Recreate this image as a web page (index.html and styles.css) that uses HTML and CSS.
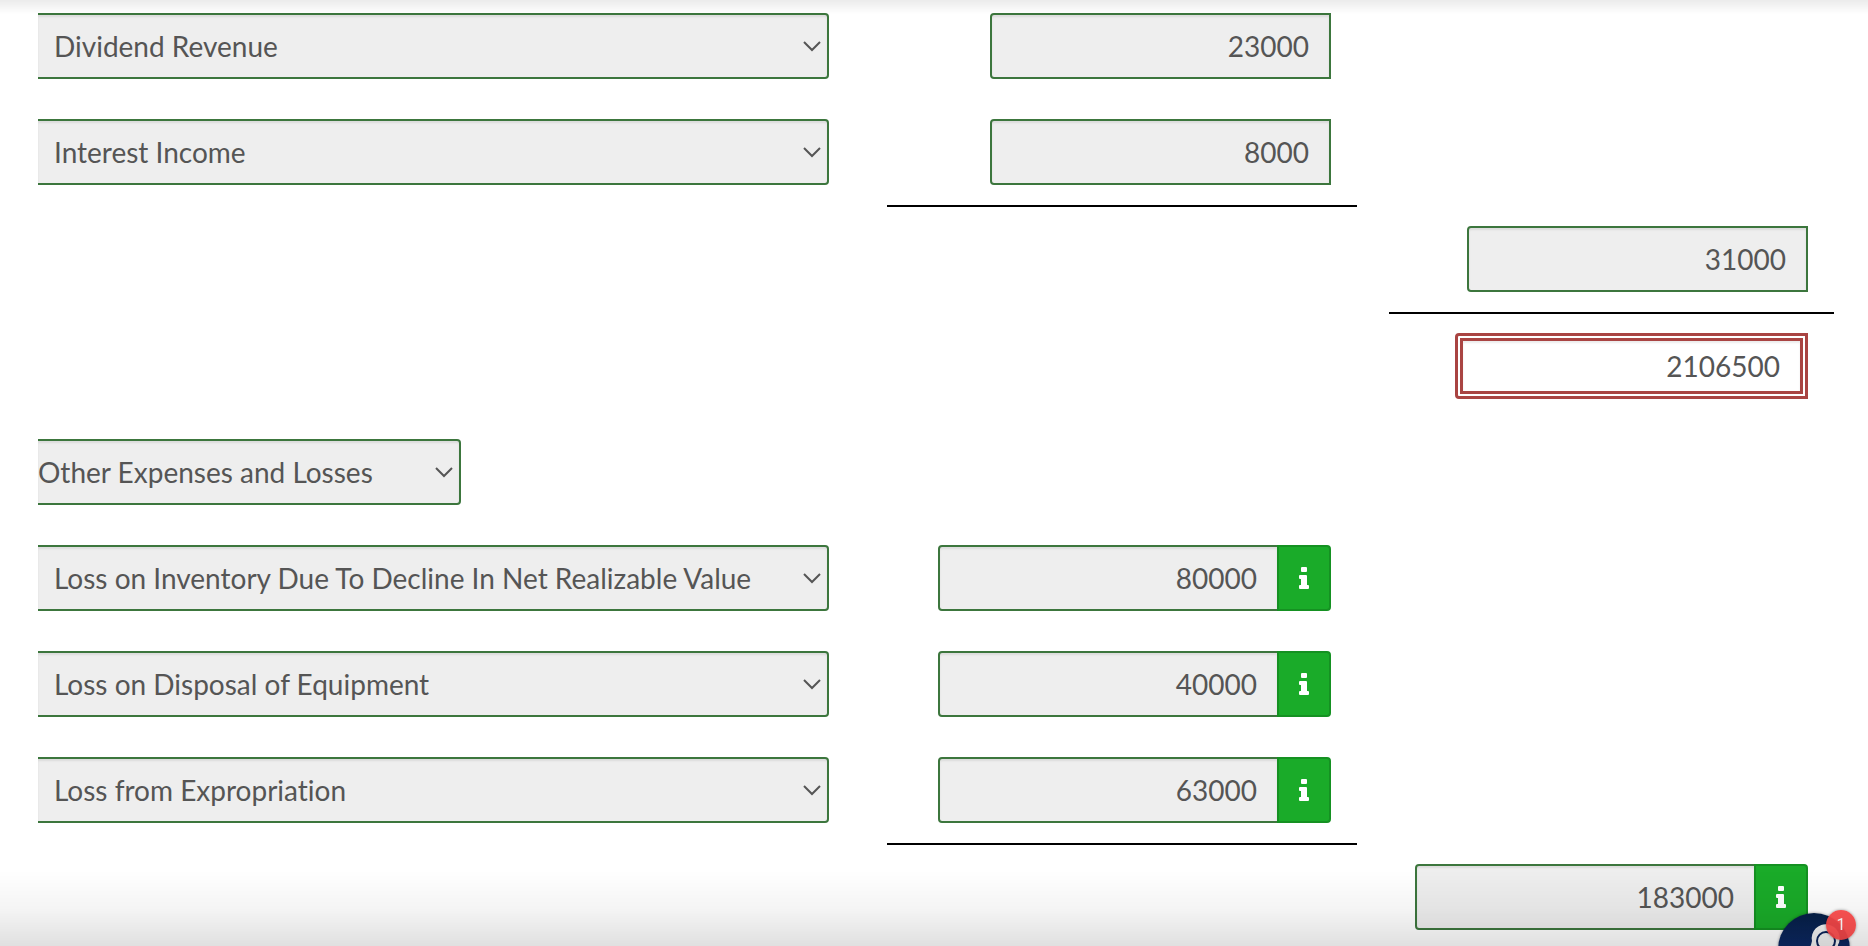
FILE: index.html
```html
<!DOCTYPE html>
<html lang="en">
<head>
<meta charset="utf-8">
<title>Income Statement</title>
<link rel="stylesheet" href="styles.css">
</head>
<body>
<svg class="sprite" aria-hidden="true">
  <symbol id="info" viewBox="0 0 10 22">
    <rect x="2" y="0" width="6" height="5" rx="1"/>
    <path d="M1 8h6q1 0 1 1v9h1q1 0 1 1v2q0 1-1 1H1q-1 0-1-1v-2q0-1 1-1h1v-6H1q-1 0-1-1V9q0-1 1-1z"/>
  </symbol>
</svg>
<main class="sheet">
  <table class="statement">
    <colgroup><col class="col-account"><col class="col-amount"><col class="col-gap"><col class="col-total"></colgroup>
    <tbody>
      <tr>
        <td class="account"><select class="picker" aria-label="Account 1" disabled><option>Dividend Revenue</option></select></td>
        <td><div class="amount"><input class="field" type="text" aria-label="Dividend Revenue amount" value="23000" readonly></div></td>
        <td></td><td></td>
      </tr>
      <tr>
        <td class="account"><select class="picker" aria-label="Account 2" disabled><option>Interest Income</option></select></td>
        <td class="rule"><div class="amount"><input class="field" type="text" aria-label="Interest Income amount" value="8000" readonly></div></td>
        <td></td><td></td>
      </tr>
      <tr class="after-rule">
        <td></td><td></td><td></td>
        <td class="rule"><div class="amount"><input class="field" type="text" aria-label="Total other revenues" value="31000" readonly></div></td>
      </tr>
      <tr class="after-rule">
        <td></td><td></td><td></td>
        <td><div class="amount"><input class="field field-wrong" type="text" aria-label="Subtotal" value="2106500"></div></td>
      </tr>
      <tr>
        <td class="account"><select class="picker picker-heading" aria-label="Section" disabled><option>Other Expenses and Losses</option></select></td>
        <td></td><td></td><td></td>
      </tr>
      <tr>
        <td class="account"><select class="picker" aria-label="Account 3" disabled><option>Loss on Inventory Due To Decline In Net Realizable Value</option></select></td>
        <td><div class="amount"><input class="field" type="text" aria-label="Loss on Inventory amount" value="80000" readonly><button class="info" type="button" aria-label="Answer details"><svg class="info-icon"><use href="#info"/></svg></button></div></td>
        <td></td><td></td>
      </tr>
      <tr>
        <td class="account"><select class="picker" aria-label="Account 4" disabled><option>Loss on Disposal of Equipment</option></select></td>
        <td><div class="amount"><input class="field" type="text" aria-label="Loss on Disposal amount" value="40000" readonly><button class="info" type="button" aria-label="Answer details"><svg class="info-icon"><use href="#info"/></svg></button></div></td>
        <td></td><td></td>
      </tr>
      <tr>
        <td class="account"><select class="picker" aria-label="Account 5" disabled><option>Loss from Expropriation</option></select></td>
        <td class="rule"><div class="amount"><input class="field" type="text" aria-label="Loss from Expropriation amount" value="63000" readonly><button class="info" type="button" aria-label="Answer details"><svg class="info-icon"><use href="#info"/></svg></button></div></td>
        <td></td><td></td>
      </tr>
      <tr class="after-rule">
        <td></td><td></td><td></td>
        <td><div class="amount"><input class="field" type="text" aria-label="Total other expenses" value="183000" readonly><button class="info" type="button" aria-label="Answer details"><svg class="info-icon"><use href="#info"/></svg></button></div></td>
      </tr>
    </tbody>
  </table>
</main>
<div class="chat">
  <button class="chat-button" type="button" aria-label="Open chat">
    <svg class="chat-icon" viewBox="0 0 72 72">
      <path d="M12 50Q31 44 34 28A14 14 0 1 1 60 32L56 60H12z" fill="#f2f2f2"/>
      <circle cx="48" cy="28" r="9" fill="#f2f2f2" stroke="#0c2459" stroke-width="2"/>
    </svg>
  </button>
  <span class="badge">1</span>
</div>
<div class="shade shade-top"></div>
<div class="shade shade-bottom"></div>
</body>
</html>
```
FILE: styles.css
```css
* {
  box-sizing: border-box;
}

html {
  height: 100%;
  overflow: hidden;
}

body {
  margin: 0;
  height: 100%;
  overflow: hidden;
  background: #fff;
  color: #555;
  font-family: Lato, "Open Sans", sans-serif;
  font-size: 28px;
  font-variant-ligatures: none;
}

.sprite {
  display: none;
}

.sheet {
  padding: 0 34px 0 38px;
  margin-top: -5px;
}

.statement {
  width: 100%;
  table-layout: fixed;
  border-collapse: separate;
  border-spacing: 0;
}

.col-amount {
  width: 470px;
}

.col-gap {
  width: 32px;
}

.col-total {
  width: 445px;
}

td {
  padding: 18px 26px 22px 0;
  vertical-align: top;
}

td.account {
  padding-right: 58px;
}

td.rule {
  padding-bottom: 20px;
  border-bottom: 2px solid #000;
}

.after-rule td {
  padding-top: 19px;
}

.picker,
.field {
  display: block;
  height: 66px;
  margin: 0;
  border: 2px solid #3c763d;
  background-color: #eee;
  box-shadow: inset 0 2px 2px rgba(0, 0, 0, 0.08);
  color: #555;
  font: inherit;
  font-variant-ligatures: none;
  opacity: 1;
}

.picker {
  appearance: none;
  width: 100%;
  padding: 0 40px 0 16px;
  border-left: 0;
  border-radius: 0 4px 4px 0;
  background-image: url("data:image/svg+xml,%3Csvg xmlns='http://www.w3.org/2000/svg' width='18' height='11' viewBox='0 0 18 11'%3E%3Cpath d='M1 1l8 8 8-8' fill='none' stroke='%23555' stroke-width='2'/%3E%3C/svg%3E");
  background-repeat: no-repeat;
  background-position: right 6px center;
}

.picker-heading {
  width: 423px;
  max-width: 100%;
  padding-left: 0;
}

.amount {
  display: flex;
  justify-content: flex-end;
}

.field {
  width: 341px;
  padding: 0 20px;
  border-radius: 4px 0 0 4px;
  text-align: right;
}

.field-wrong {
  width: 353px;
  border: 8px double #a94442;
  background-color: #fff;
}

.info {
  display: flex;
  align-items: center;
  justify-content: center;
  width: 54px;
  height: 66px;
  margin: 0 0 0 -2px;
  padding: 0;
  border: 2px solid #159122;
  border-radius: 0 4px 4px 0;
  background: #1aab29;
}

.info-icon {
  width: 10px;
  height: 22px;
  fill: #fff;
}

.chat {
  position: fixed;
  right: 18px;
  bottom: -39px;
  width: 72px;
  height: 72px;
}

.chat-button {
  display: block;
  width: 72px;
  height: 72px;
  padding: 0;
  border: 0;
  border-radius: 50%;
  background: linear-gradient(#061f45, #0d2966 50%);
  box-shadow: 0 0 3px rgba(0, 0, 0, 0.4);
  overflow: hidden;
}

.chat-icon {
  display: block;
  width: 72px;
  height: 72px;
}

.badge {
  position: absolute;
  top: -3px;
  right: -6px;
  width: 30px;
  height: 30px;
  border-radius: 50%;
  background: rgba(255, 72, 72, 0.94);
  box-shadow: 0 0 3px rgba(0, 0, 0, 0.4);
  color: #fff;
  font-family: Roboto, sans-serif;
  font-size: 16px;
  line-height: 30px;
  text-align: center;
  z-index: 2;
}

.shade {
  position: fixed;
  left: 0;
  right: 0;
  pointer-events: none;
}

.shade-top {
  top: 0;
  height: 14px;
  background: linear-gradient(rgba(0, 0, 0, 0.08), rgba(0, 0, 0, 0));
}

.shade-bottom {
  bottom: 0;
  height: 76px;
  background: linear-gradient(rgba(0, 0, 0, 0), rgba(0, 0, 0, 0.04) 50%, rgba(0, 0, 0, 0.12));
}
```
